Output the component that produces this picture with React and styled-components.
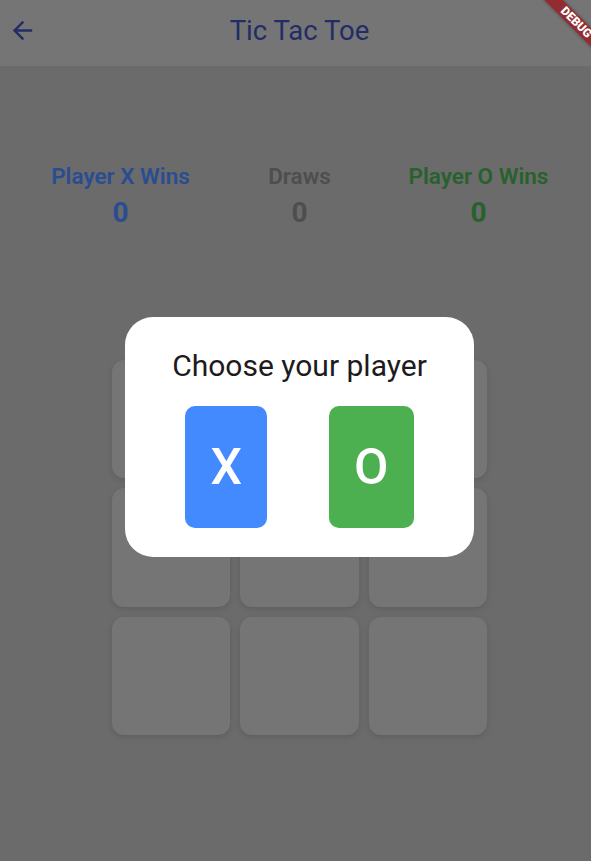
import React from "react";
import styled, { createGlobalStyle } from "styled-components";

const GlobalStyle = createGlobalStyle`
  html, body { margin: 0; padding: 0; }
  body {
    font-family: Roboto, "Noto Sans", "Liberation Sans", sans-serif;
    background: #6b6b6b;
    overflow: hidden;
  }
`;

const Viewport = styled.div`
  width: 591px;
  height: 861px;
  overflow: hidden;
  position: relative;
`;

const Screen = styled.div`
  position: relative;
  width: 599px;
  height: 861px;
  background: #6b6b6b;
  display: flex;
  flex-direction: column;
`;

const AppBar = styled.header`
  height: 66px;
  box-sizing: border-box;
  padding-bottom: 5px;
  background: #757575;
  display: grid;
  grid-template-columns: 56px 1fr 56px;
  align-items: center;
`;

const BackButton = styled.button`
  justify-self: start;
  margin-left: 8px;
  width: 29px;
  height: 29px;
  padding: 0;
  border: none;
  background: transparent;
  color: #232c66;
  display: flex;
  align-items: center;
  justify-content: center;
  svg { width: 29px; height: 29px; display: block; }
`;

const Title = styled.h1`
  margin: 0;
  text-align: center;
  font-size: 27.5px;
  font-weight: 400;
  line-height: 32px;
  color: #232c66;
`;

const Body = styled.main`
  display: flex;
  flex-direction: column;
  align-items: center;
  padding-top: 97px;
`;

const ScoreBoard = styled.section`
  align-self: stretch;
  display: grid;
  grid-template-columns: repeat(3, 1fr);
  padding: 0 31px;
`;

const Score = styled.div`
  display: flex;
  flex-direction: column;
  align-items: center;
  gap: 7px;
  color: ${(p) => p.$color};
`;

const ScoreLabel = styled.div`
  font-size: 22.5px;
  font-weight: 600;
  line-height: 26px;
  white-space: nowrap;
`;

const ScoreValue = styled.div`
  font-size: 28px;
  font-weight: 700;
  line-height: 34px;
`;

const Board = styled.div`
  margin-top: 130px;
  width: 375px;
  display: grid;
  grid-template-columns: repeat(3, 1fr);
  gap: 10.3px;
`;

const Cell = styled.div`
  aspect-ratio: 1;
  background: #757575;
  border-radius: 12px;
  box-shadow: 0 2px 6px rgba(0, 0, 0, 0.12);
`;

const Barrier = styled.div`
  position: absolute;
  inset: 0;
  padding-top: 13px;
  display: flex;
  align-items: center;
  justify-content: center;
  z-index: 5;
`;

const Dialog = styled.div`
  width: 349px;
  box-sizing: border-box;
  background: #ffffff;
  border-radius: 28px;
  padding: 31px 0 29px;
  display: flex;
  flex-direction: column;
  align-items: center;
  gap: 22px;
`;

const DialogTitle = styled.h2`
  margin: 0;
  font-size: 30px;
  font-weight: 400;
  line-height: 36px;
  color: #1d1b20;
  white-space: nowrap;
`;

const Choices = styled.div`
  display: flex;
  justify-content: center;
  gap: 62px;
`;

const ChoiceButton = styled.button`
  height: 122px;
  padding: 0 25px;
  border: none;
  border-radius: 10px;
  background: ${(p) => p.$bg};
  color: #ffffff;
  font-family: Roboto, "Noto Sans", sans-serif;
  font-size: 50px;
  font-weight: 500;
  line-height: 1;
  display: flex;
  align-items: center;
  justify-content: center;
`;

const DebugBanner = styled.div`
  position: absolute;
  left: 536px;
  top: 15.5px;
  width: 80px;
  height: 13px;
  transform: rotate(45deg);
  background: #932c30;
  box-shadow: 0 0 4px rgba(0, 0, 0, 0.35);
  color: #ffffff;
  font-size: 12px;
  font-weight: 900;
  line-height: 13px;
  text-align: center;
  z-index: 10;
`;

const scores = [
  { label: "Player X Wins", value: 0, color: "#2a4d92" },
  { label: "Draws", value: 0, color: "#4e4e4e" },
  { label: "Player O Wins", value: 0, color: "#28612c" },
];

export default function App() {
  return (
    <>
      <GlobalStyle />
      <Viewport>
        <Screen>
          <AppBar>
            <BackButton aria-label="Back">
              <svg viewBox="0 0 24 24" fill="currentColor">
                <path d="M20 11H7.83l5.59-5.59L12 4l-8 8 8 8 1.41-1.41L7.83 13H20v-2z" />
              </svg>
            </BackButton>
            <Title>Tic Tac Toe</Title>
            <span />
          </AppBar>
          <Body>
            <ScoreBoard>
              {scores.map((s) => (
                <Score key={s.label} $color={s.color}>
                  <ScoreLabel>{s.label}</ScoreLabel>
                  <ScoreValue>{s.value}</ScoreValue>
                </Score>
              ))}
            </ScoreBoard>
            <Board>
              {Array.from({ length: 9 }).map((_, i) => (
                <Cell key={i} />
              ))}
            </Board>
          </Body>
          <Barrier>
            <Dialog>
              <DialogTitle>Choose your player</DialogTitle>
              <Choices>
                <ChoiceButton $bg="#448aff">X</ChoiceButton>
                <ChoiceButton $bg="#4caf50">O</ChoiceButton>
              </Choices>
            </Dialog>
          </Barrier>
          <DebugBanner>DEBUG</DebugBanner>
        </Screen>
      </Viewport>
    </>
  );
}
